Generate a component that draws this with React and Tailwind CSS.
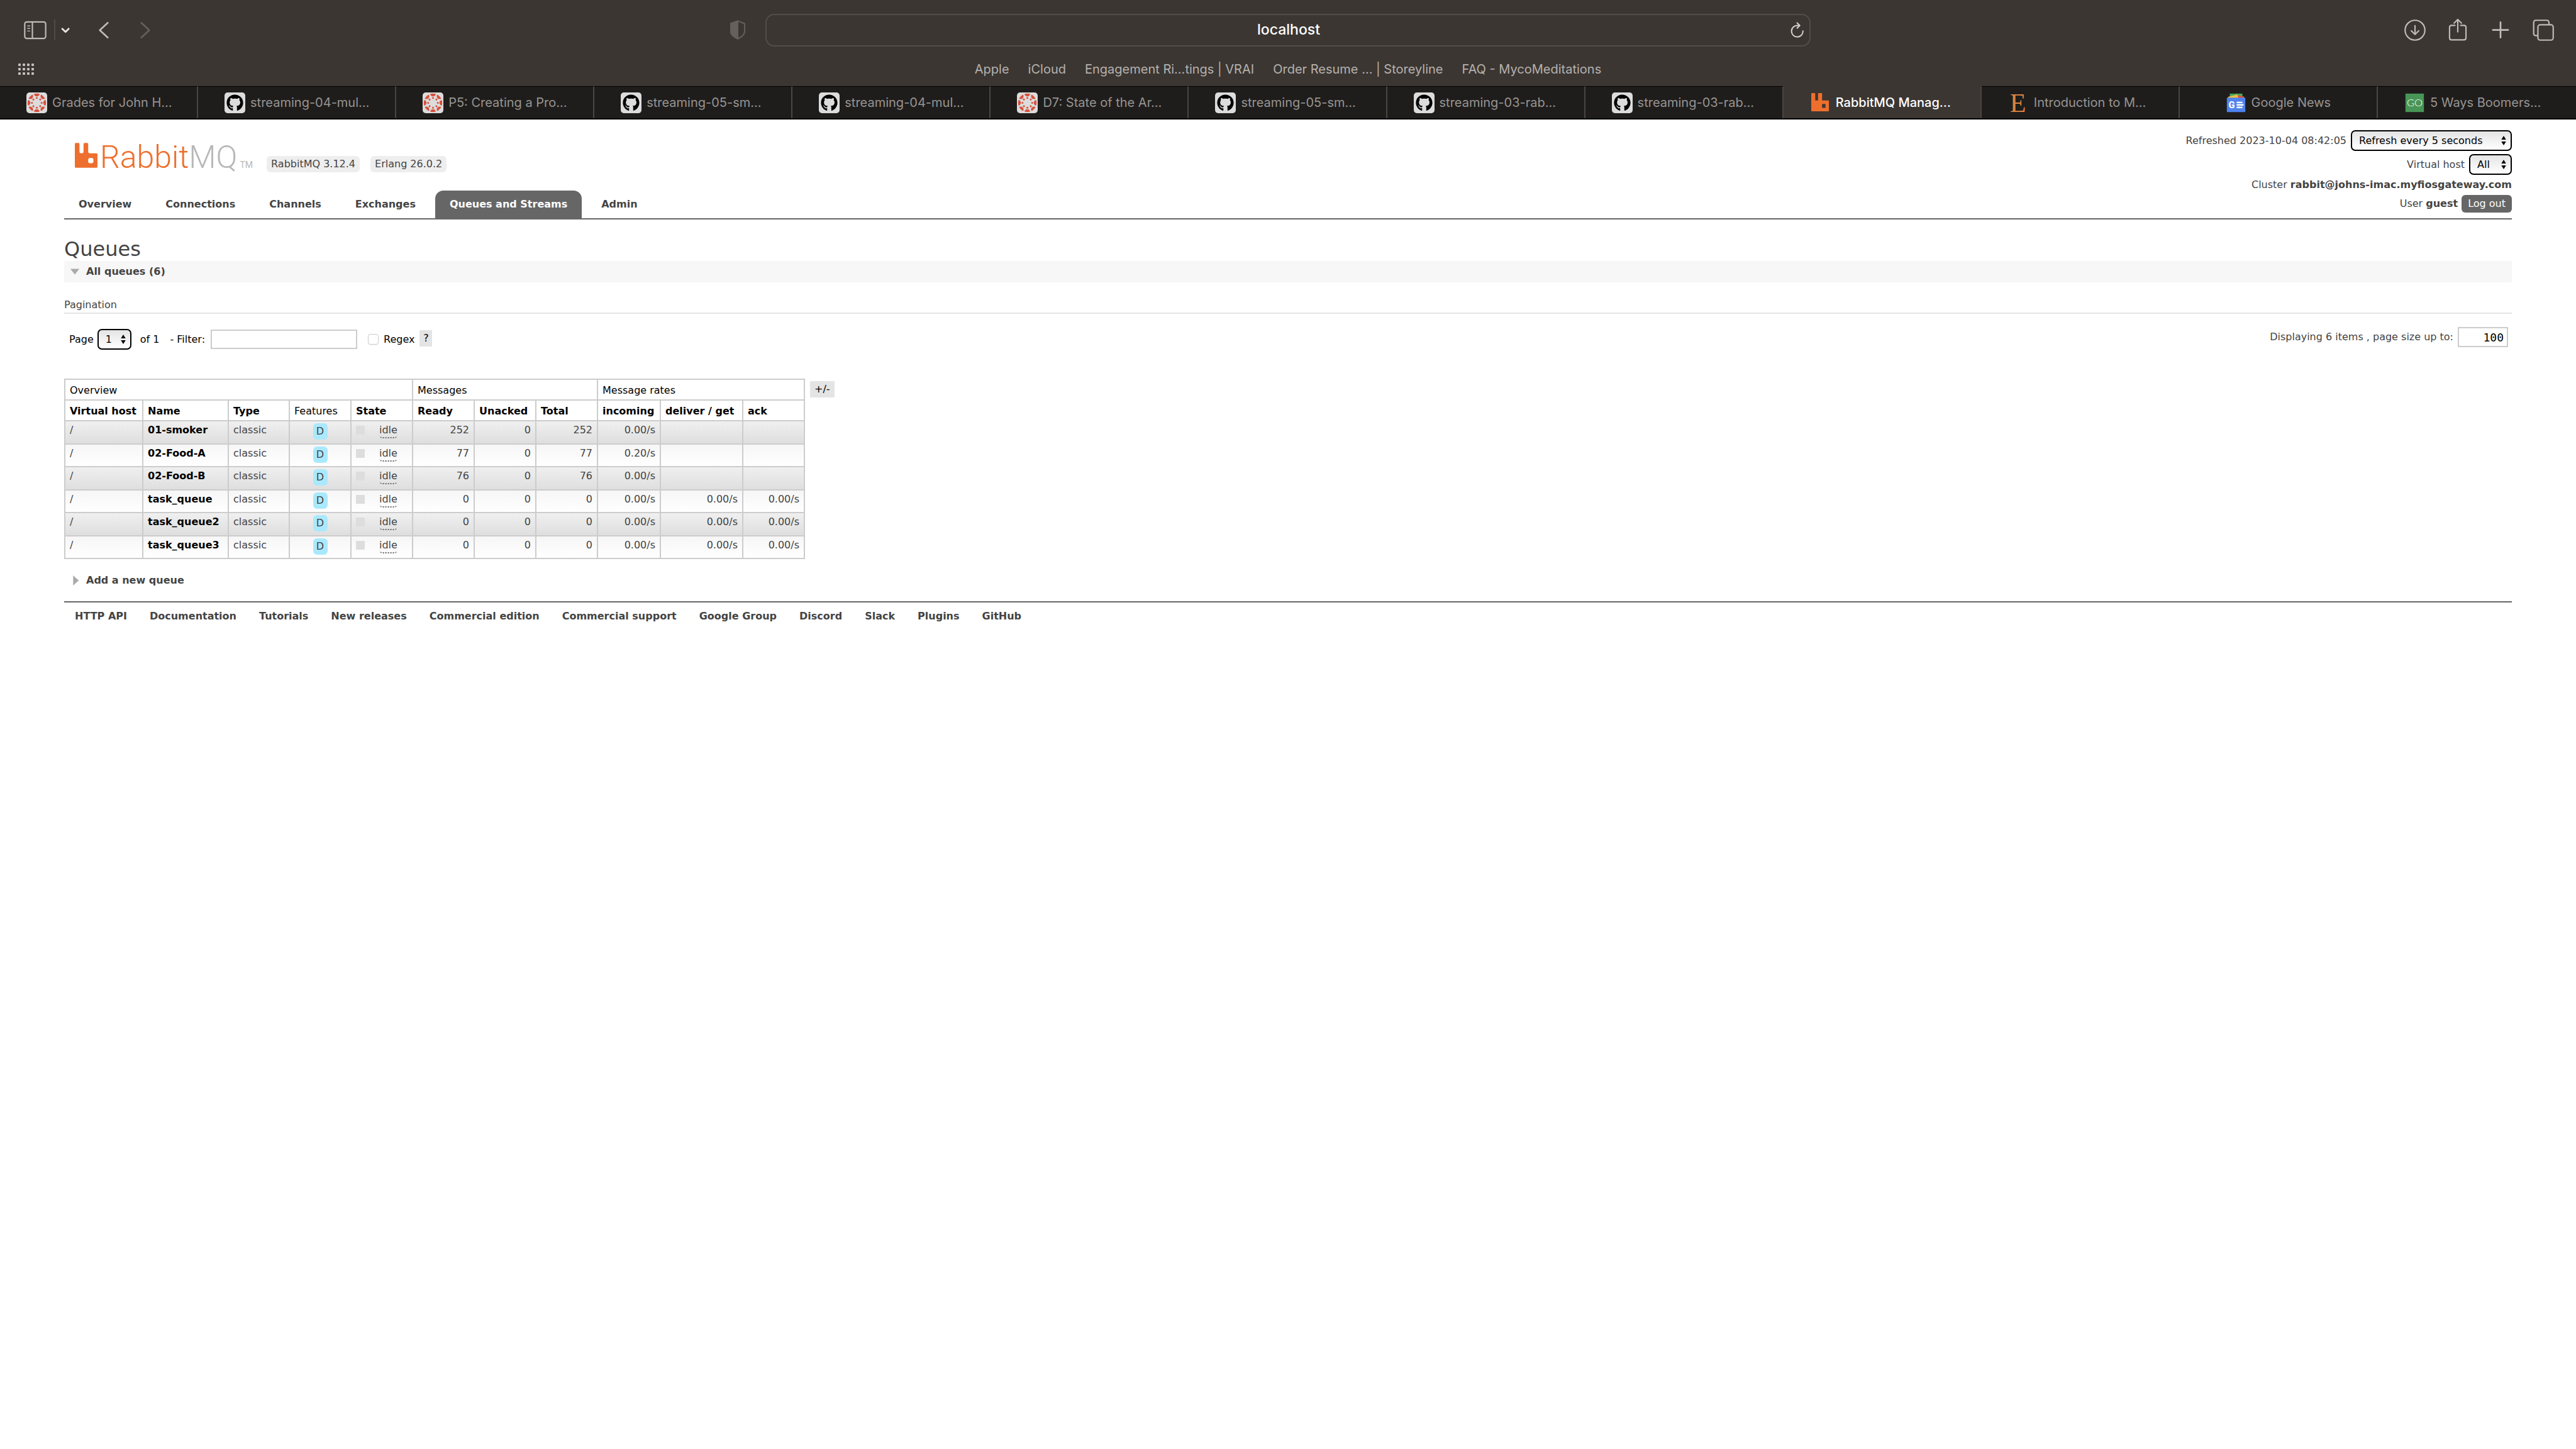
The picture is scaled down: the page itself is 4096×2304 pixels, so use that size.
import { FaGithub } from "react-icons/fa";

const TABS = [
  { icon: "canvas", label: "Grades for John H…" },
  { icon: "github", label: "streaming-04-mul…" },
  { icon: "canvas", label: "P5: Creating a Pro…" },
  { icon: "github", label: "streaming-05-sm…" },
  { icon: "github", label: "streaming-04-mul…" },
  { icon: "canvas", label: "D7: State of the Ar…" },
  { icon: "github", label: "streaming-05-sm…" },
  { icon: "github", label: "streaming-03-rab…" },
  { icon: "github", label: "streaming-03-rab…" },
  { icon: "rabbit", label: "RabbitMQ Manag…", active: true },
  { icon: "etsy", label: "Introduction to M…" },
  { icon: "news", label: "Google News", center: true },
  { icon: "go", label: "5 Ways Boomers…" },
];

const BOOKMARKS = [
  "Apple",
  "iCloud",
  "Engagement Ri…tings | VRAI",
  "Order Resume … | Storeyline",
  "FAQ - MycoMeditations",
];

const NAV = ["Overview", "Connections", "Channels", "Exchanges", "Queues and Streams", "Admin"];

const QUEUES = [
  ["01-smoker", "252", "0", "252", "0.00/s", "", ""],
  ["02-Food-A", "77", "0", "77", "0.20/s", "", ""],
  ["02-Food-B", "76", "0", "76", "0.00/s", "", ""],
  ["task_queue", "0", "0", "0", "0.00/s", "0.00/s", "0.00/s"],
  ["task_queue2", "0", "0", "0", "0.00/s", "0.00/s", "0.00/s"],
  ["task_queue3", "0", "0", "0", "0.00/s", "0.00/s", "0.00/s"],
];

const FOOTER = [
  "HTTP API",
  "Documentation",
  "Tutorials",
  "New releases",
  "Commercial edition",
  "Commercial support",
  "Google Group",
  "Discord",
  "Slack",
  "Plugins",
  "GitHub",
];

const ANGLES = [0, 45, 90, 135, 180, 225, 270, 315];

function RabbitMark({ className }) {
  return (
    <svg viewBox="0 0 39 43" className={className} aria-hidden="true" fill="#ee6f2d">
      <path
        fillRule="evenodd"
        d="M2 0h4q2 0 2 2v13q0 3 3 3h1q3 0 3-3V2q0-2 2-2h4q2 0 2 2v13q0 3 3 3h11q2 0 2 2v21q0 2-2 2H2q-2 0-2-2V2q0-2 2-2zM26 26q-3 0-3 3v3q0 3 3 3h3q3 0 3-3v-3q0-3-3-3z"
      />
    </svg>
  );
}

function CanvasMark() {
  return (
    <span className="flex size-[33px] shrink-0 rounded-[5px] bg-[#dcdcdc]">
      <svg viewBox="0 0 36 36" className="size-full" aria-hidden="true" fill="#d9503c">
        <clipPath id="canvas-disc">
          <circle cx="18" cy="18" r="16" />
        </clipPath>
        <g clipPath="url(#canvas-disc)">
          {ANGLES.map((a) => (
            <circle key={a} cx="18" cy="1.8" r="5" transform={`rotate(${a} 18 18)`} />
          ))}
        </g>
        {ANGLES.map((a) => (
          <circle key={a} cx="18" cy="9.6" r="1.7" transform={`rotate(${a} 18 18)`} />
        ))}
      </svg>
    </span>
  );
}

function TabIcon({ name }) {
  if (name === "canvas") return <CanvasMark />;
  if (name === "github")
    return (
      <span className="flex size-[33px] shrink-0 items-center justify-center rounded-[5px] bg-[#dcdcdc] text-black">
        <FaGithub className="size-[27px]" />
      </span>
    );
  if (name === "rabbit")
    return (
      <span className="flex size-[33px] shrink-0 items-center justify-center">
        <svg viewBox="0 0 32 32" className="size-[29px]" aria-hidden="true" fill="#ee6f2d">
          <path fillRule="evenodd" d="M0 1q0-1 1-1h5q1 0 1 1v11q0 1 1 1h3q1 0 1-1V1q0-1 1-1h5q1 0 1 1v11q0 1 1 1h10q1 0 1 1v17q0 1-1 1H1q-1 0-1-1zM19 20v5q0 1 1 1h4q1 0 1-1v-5q0-1-1-1h-4q-1 0-1 1z" />
        </svg>
      </span>
    );
  if (name === "etsy")
    return (
      <svg viewBox="0 0 36 36" className="size-[33px] shrink-0 overflow-visible" aria-hidden="true">
        <text x="3" y="34" fontSize="46" fontFamily="Liberation Serif, serif" fill="#dc8440">
          E
        </text>
      </svg>
    );
  if (name === "news")
    return (
      <svg viewBox="0 0 36 36" className="size-[33px] shrink-0" aria-hidden="true">
        <path d="M7 2h22v10H7z" fill="#4ca65a" />
        <path d="M21 5l11 2v5H19z" fill="#e0503e" />
        <path d="M4 7.500L20 3.500L23 12H5z" fill="#f3bd42" />
        <rect x="2" y="9" width="32" height="25" rx="1" fill="#4f83ee" />
        <text x="5" y="27" fontSize="16" fontWeight="800" fontFamily="Roboto, sans-serif" fill="#fff">
          G
        </text>
        <path d="M19 16h10v2.600H19zM19 20.300h12v2.600H19zM19 24.600h10v2.600H19z" fill="#fff" />
      </svg>
    );
  return (
    <svg viewBox="0 0 36 36" className="size-[33px] shrink-0" aria-hidden="true">
      <rect x="2" y="2" width="32" height="32" fill="#489656" />
      <text x="18" y="24" textAnchor="middle" fontSize="18" fontWeight="300" fontFamily="Lato, sans-serif" fill="#fff">
        GO
      </text>
    </svg>
  );
}

function ToolButton({ label, className = "", children }) {
  return (
    <button aria-label={label} className={`flex shrink-0 items-center justify-center text-[#bfbbb8] ${className}`}>
      <svg viewBox="0 0 40 40" className="size-[36px]" fill="none" stroke="currentColor" strokeWidth="2.400" strokeLinecap="round" strokeLinejoin="round">
        {children}
      </svg>
    </button>
  );
}

function BrowserChrome() {
  return (
    <div className="bg-[#3b3632] font-[Inter,sans-serif]">
      <div className="grid h-[95px] grid-cols-[1fr_minmax(0,40.6%)_1fr] items-center">
        <div className="flex items-center pl-[38px]">
          <ToolButton label="Show sidebar">
            <rect x="1.500" y="5.500" width="37" height="29" rx="3.500" />
            <path d="M15 6v28" />
            <path d="M6.500 12.500h4M6.500 17h4M6.500 21.500h4" strokeWidth="1.600" />
          </ToolButton>
          <span className="ml-[12px] h-[33px] w-[2px] bg-[#4f4a46]" />
          <button aria-label="Tab groups" className="ml-[7px] text-[#eae7e5]">
            <svg viewBox="0 0 20 20" className="size-[18px]" fill="none" stroke="currentColor" strokeWidth="3" strokeLinecap="round" strokeLinejoin="round">
              <path d="M4.500 7.500L10.200 13l5.600-5.500" />
            </svg>
          </button>
          <ToolButton label="Back" className="ml-[34px]">
            <path d="M27 7L13 20l14 13" strokeWidth="3" />
          </ToolButton>
          <ToolButton label="Forward" className="ml-[30px]">
            <path d="M13 7l14 13L13 33" strokeWidth="3" stroke="#65605c" />
          </ToolButton>
          <button aria-label="Privacy report" className="mr-[31px] ml-auto">
            <svg viewBox="0 0 28 34" className="h-[31px] w-[26px]" fill="none" stroke="#65605c" strokeWidth="2.200" strokeLinejoin="round">
              <path d="M14 1.500L26 6v14q0 7-12 12.500Q2 27 2 20V6z" />
              <path d="M14 1.500V32.500Q2 27 2 20V6z" fill="#65605c" />
            </svg>
          </button>
        </div>
        <div className="flex h-[52px] items-center rounded-[14px] border-2 border-[#524d49] px-[6px]">
          <input
            aria-label="Address"
            defaultValue="localhost"
            className="min-w-0 flex-1 bg-transparent pl-[28px] text-center text-[23px] font-medium text-white outline-none"
          />
          <button aria-label="Reload" className="text-[#d5d2cf]">
            <svg viewBox="0 0 28 28" className="size-[26px]" fill="none" stroke="currentColor" strokeWidth="2.200" strokeLinecap="round" strokeLinejoin="round">
              <path d="M23.500 15.500A9.800 9.800 0 1 1 14 6h3" />
              <path d="M13.500 1.500l4.500 4.500l-4.500 4.500" />
            </svg>
          </button>
        </div>
        <div className="flex items-center justify-end gap-[32px] pr-[34px]">
          <ToolButton label="Downloads">
            <circle cx="20" cy="20" r="17.500" />
            <path d="M20 12v15M13.500 21l6.500 6.500l6.500-6.500" />
          </ToolButton>
          <ToolButton label="Share">
            <path d="M15 11.500h-6q-3.500 0-3.500 3.500v18.500q0 3.500 3.500 3.500h22q3.500 0 3.500-3.500V15q0-3.500-3.500-3.500h-6" />
            <path d="M20 23V1.500M13.500 7.500L20 1l6.500 6.500" />
          </ToolButton>
          <ToolButton label="New tab">
            <path d="M20 6v27M6.500 19.500h27" strokeWidth="3" />
          </ToolButton>
          <ToolButton label="Show all tabs">
            <rect x="10.500" y="10.500" width="27" height="27" rx="4" />
            <path d="M10 29.500h-3q-4 0-4-4V6.500q0-4 4-4h19q4 0 4 4v3.500" />
          </ToolButton>
        </div>
      </div>
      <div className="grid h-[42px] grid-cols-[1fr_auto_1fr] pb-[12px] text-[20px] leading-[30px] text-[#b5b1ae]">
        <button aria-label="Show start page" className="ml-[28px] flex items-center">
          <svg viewBox="0 0 26 18" className="h-[18px] w-[26px]" fill="#c3bfbc" aria-hidden="true">
            {[0, 7, 14, 21].map((x) => [0, 7, 14].map((y) => <rect key={`${x}-${y}`} x={x + 1} y={y} width="4" height="4" rx="1" />))}
          </svg>
        </button>
        <nav className="flex gap-[30px]" aria-label="Bookmarks">
          {BOOKMARKS.map((b) => (
            <a key={b} href="#bookmark">
              {b}
            </a>
          ))}
        </nav>
        <span />
      </div>
      <div className="grid h-[53px] grid-cols-13 border-b-2 border-black" role="tablist">
        {TABS.map((t, i) => (
          <button
            key={i}
            role="tab"
            aria-selected={!!t.active}
            className={`flex min-w-0 items-center gap-[8px] text-[20px] whitespace-nowrap ${
              i < TABS.length - 1 ? "border-r-2 border-r-[#4a4541]" : ""
            } ${t.center ? "justify-center" : "pl-[42px]"} ${
              t.active ? "font-medium text-white" : "border-t border-t-black bg-[#1f1d1c] text-[#979491]"
            }`}
          >
            <TabIcon name={t.icon} />
            <span>{t.label}</span>
          </button>
        ))}
      </div>
    </div>
  );
}

function Select({ label, options, className }) {
  return (
    <span className="relative inline-flex">
      <select
        aria-label={label}
        className={`h-[33px] appearance-none rounded-[7px] border-2 border-black bg-linear-to-b from-[#e4e4e4] to-white pl-[11px] text-black ${className}`}
      >
        {options.map((o) => (
          <option key={o}>{o}</option>
        ))}
      </select>
      <svg viewBox="0 0 8 16" className="pointer-events-none absolute top-[9px] right-[9px] h-[15px] w-[8px]" fill="#000" aria-hidden="true">
        <path d="M4 0l4 6.500H0zM4 16l4-6.500H0z" />
      </svg>
    </span>
  );
}

function Header() {
  return (
    <header className="flex justify-between border-b-2 border-[#666]">
      <div className="flex flex-col justify-end">
        <div className="mb-[29px] flex items-end pl-[17px]">
          <a href="#home" aria-label="RabbitMQ" className="mb-[7px] flex h-[40px] items-start">
            <RabbitMark className="h-[40px] w-[36px]" />
            <span className="ml-[4px] font-[Roboto,sans-serif] text-[50px] leading-[46px] font-light text-[#ee6f2d]">
              Rabbit<span className="text-[#b8b8b8]">MQ</span>
            </span>
            <span className="ml-[4px] self-end font-[Roboto,sans-serif] text-[14px] leading-[10px] text-[#b8b8b8]">TM</span>
          </a>
          <span className="ml-[22px] rounded-[6px] bg-[#eee] px-[7px] leading-[26px]">RabbitMQ 3.12.4</span>
          <span className="ml-[17px] rounded-[6px] bg-[#eee] px-[7px] leading-[26px]">Erlang 26.0.2</span>
        </div>
        <nav className="flex gap-[8px] font-bold" aria-label="Main">
          {NAV.map((n) => (
            <a
              key={n}
              href="#nav"
              className={`rounded-t-[13px] px-[23px] leading-[44px] ${n === "Queues and Streams" ? "bg-[#666] text-white" : ""}`}
            >
              {n}
            </a>
          ))}
        </nav>
      </div>
      <div className="flex flex-col items-end gap-[5px] pt-[17px] pb-[9px]">
        <div className="flex items-center gap-[7px]">
          <span>Refreshed 2023-10-04 08:42:05</span>
          <Select label="Refresh interval" options={["Refresh every 5 seconds"]} className="w-[256px]" />
        </div>
        <div className="flex items-center gap-[7px]">
          <span>Virtual host</span>
          <Select label="Virtual host" options={["All"]} className="w-[68px]" />
        </div>
        <div className="leading-[22px]">
          Cluster <b>rabbit@johns-imac.myfiosgateway.com</b>
        </div>
        <div className="flex items-center gap-[6px]">
          <span>
            User <b>guest</b>
          </span>
          <button className="h-[28px] rounded-[6px] bg-[#666] px-[10px] text-white">Log out</button>
        </div>
      </div>
    </header>
  );
}

const HEAD = "h-[33px] border-2 border-[#ccc] px-[7px] pt-[3px] text-left text-black whitespace-nowrap";
const CELL = "border-2 border-[#ccc] px-[7px] pt-[3px] align-top leading-[22px]";

function QueueTable() {
  return (
    <div className="flex items-start gap-[8px]">
      <table className="table-fixed border-collapse">
        <colgroup>
          <col className="w-[124px]" />
          <col className="w-[136px]" />
          <col className="w-[97px]" />
          <col className="w-[98px]" />
          <col className="w-[98px]" />
          <col className="w-[98px]" />
          <col className="w-[98px]" />
          <col className="w-[98px]" />
          <col className="w-[100px]" />
          <col className="w-[131px]" />
          <col className="w-[98px]" />
        </colgroup>
        <thead>
          <tr>
            <th colSpan={5} className={`${HEAD} font-normal`}>Overview</th>
            <th colSpan={3} className={`${HEAD} font-normal`}>Messages</th>
            <th colSpan={3} className={`${HEAD} font-normal`}>Message rates</th>
          </tr>
          <tr>
            {["Virtual host", "Name", "Type", "Features", "State", "Ready", "Unacked", "Total", "incoming", "deliver / get", "ack"].map((h) => (
              <th key={h} className={`${HEAD} ${h === "Features" ? "font-normal" : "font-bold"}`}>
                {h}
              </th>
            ))}
          </tr>
        </thead>
        <tbody>
          {QUEUES.map(([name, ...nums]) => (
            <tr key={name} className="h-[36px] bg-linear-to-b from-[#f6f6f6] to-white odd:h-[37px] odd:from-[#f0f0f0] odd:to-[#dedede]">
              <td className={CELL}>/</td>
              <td className={CELL}>
                <a href="#queue" className="font-bold text-black">{name}</a>
              </td>
              <td className={CELL}>classic</td>
              <td className={CELL}>
                <abbr title="durable: true" className="mx-auto block w-[23px] rounded-[6px] bg-[#aae9fd] text-center leading-[26px] no-underline">
                  D
                </abbr>
              </td>
              <td className={CELL}>
                <div className="flex items-start">
                  <span className="mt-[4px] size-[14px] bg-[#ddd]" />
                  <abbr title="idle" className="ml-[23px] rounded-[5px] border-b-2 border-dotted border-[#666] leading-[22px] no-underline">
                    idle
                  </abbr>
                </div>
              </td>
              {nums.map((n, i) => (
                <td key={i} className={`${CELL} text-right`}>{n}</td>
              ))}
            </tr>
          ))}
        </tbody>
      </table>
      <button aria-label="Choose columns" className="mt-[4px] bg-[#e4e4e4] px-[7px] leading-[26px] text-black">+/-</button>
    </div>
  );
}

export default function App() {
  return (
    <div className="min-h-screen bg-white">
      <BrowserChrome />
      <main className="px-[102px] font-['DejaVu_Sans',sans-serif] text-[16px] leading-[22px] text-[#444]">
        <Header />
        <h1 className="mt-[29px] text-[32px] leading-[37px]">Queues</h1>
        <h2>
          <button className="flex h-[34px] w-full items-center gap-[10px] bg-[#f7f7f7] pl-[9px] font-bold">
            <svg viewBox="0 0 18 18" className="size-[16px]" fill="#aaa" aria-hidden="true">
              <path d="M1 4h16l-8 10z" />
            </svg>
            All queues (6)
          </button>
        </h2>
        <h3 className="mt-[24px] border-b-2 border-[#e4e4e4] leading-[24px]">Pagination</h3>
        <div className="mt-[21px] flex items-start justify-between pr-[6px] pl-[8px]">
          <div className="flex items-center pt-[3px] text-black">
            <span className="mr-[6px]">Page</span>
            <Select label="Page" options={["1"]} className="w-[54px]" />
            <span className="ml-[14px]">of 1</span>
            <label htmlFor="filter" className="mr-[9px] ml-[17px]">- Filter:</label>
            <input id="filter" className="h-[31px] w-[233px] border-2 border-[#ccc] px-[4px]" />
            <input id="regex" type="checkbox" className="ml-[17px] size-[17px] appearance-none rounded-[4px] border border-[#ccc] bg-white shadow-xs" />
            <label htmlFor="regex" className="ml-[8px]">Regex</label>
            <button aria-label="Help" className="mb-[4px] ml-[8px] w-[20px] bg-[#e4e4e4] leading-[26px]">?</button>
          </div>
          <div className="flex items-center gap-[7px]">
            <label htmlFor="page-size">Displaying 6 items , page size up to:</label>
            <input
              id="page-size"
              defaultValue="100"
              className="h-[32px] w-[80px] border-2 border-[#ccc] pr-[5px] text-right font-['DejaVu_Sans_Mono',monospace] text-[18px] text-black"
            />
          </div>
        </div>
        <div className="mt-[46px]">
          <QueueTable />
        </div>
        <h2 className="mt-[17px]">
          <button className="flex h-[34px] items-center gap-[10px] pl-[9px] font-bold">
            <svg viewBox="0 0 18 18" className="size-[16px]" fill="#aaa" aria-hidden="true">
              <path d="M6 0l10 9l-10 9z" />
            </svg>
            Add a new queue
          </button>
        </h2>
        <footer className="mt-[16px] flex gap-[36px] border-t-2 border-[#666] pt-[11px] pl-[17px] font-bold">
          {FOOTER.map((f) => (
            <a key={f} href="#footer">
              {f}
            </a>
          ))}
        </footer>
      </main>
    </div>
  );
}
